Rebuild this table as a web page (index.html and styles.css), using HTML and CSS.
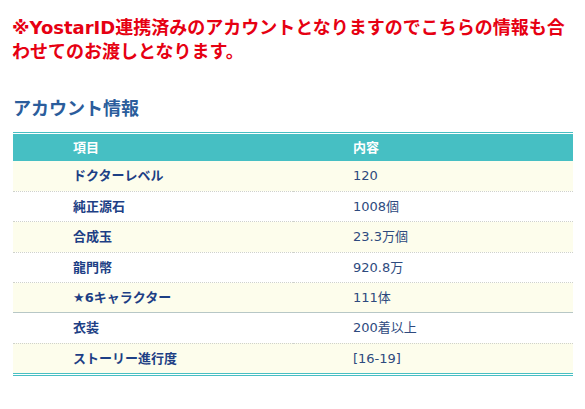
FILE: index.html
```html
<!DOCTYPE html>
<html lang="ja">
<head>
    <meta charset="UTF-8">
    <meta name="viewport" content="width=device-width, initial-scale=1.0">
    <title>アカウント情報</title>
    <link rel="stylesheet" href="styles.css">
</head>

<body>
    <div class="conteudo">
        <p class="aviso">※YostarID連携済みのアカウントとなりますのでこちらの情報も合わせてのお渡しとなります。</p>

        <h2 class="titulo">アカウント情報</h2>

        <div class="tabela">
            <table>
                <thead>
                    <tr>
                        <th>項目</th>
                        <th>内容</th>
                    </tr>
                </thead>
                <tbody>
                    <tr class="claro">
                        <th>ドクターレベル</th>
                        <td>120</td>
                    </tr>
                    <tr>
                        <th>純正源石</th>
                        <td>1008個</td>
                    </tr>
                    <tr class="claro">
                        <th>合成玉</th>
                        <td>23.3万個</td>
                    </tr>
                    <tr>
                        <th>龍門幣</th>
                        <td>920.8万</td>
                    </tr>
                    <tr class="claro solido">
                        <th>★6キャラクター</th>
                        <td>111体</td>
                    </tr>
                    <tr>
                        <th>衣装</th>
                        <td>200着以上</td>
                    </tr>
                    <tr class="claro ultimo">
                        <th>ストーリー進行度</th>
                        <td>[16-19]</td>
                    </tr>
                </tbody>
            </table>
        </div>
    </div>
</body>

</html>
```

FILE: styles.css
```css
body {
    margin: 0;
    background-color: #fff;
    font-family: "DejaVu Sans", "Noto Sans CJK JP", sans-serif;
}

.conteudo {
    padding: 16px 12px 0 13px;
}

.aviso {
    margin: 0 0 0 -1px;
    color: #e60012;
    font-size: 18px;
    font-weight: bold;
    line-height: 24px;
}

.titulo {
    margin: 34px 0 12px;
    color: #2b5d9c;
    font-size: 18px;
    font-weight: bold;
    line-height: 22px;
}

.tabela {
    border-top: 1px solid #48bfc3;
    border-bottom: 3px double #48bfc3;
    padding-top: 1px;
}

table {
    width: 100%;
    border-collapse: collapse;
    table-layout: fixed;
    font-size: 13px;
}

th,
td {
    text-align: left;
    padding: 7px 0 7px 60px;
    line-height: 15.4px;
    border-bottom: 1px dotted #cfd2cc;
}

thead th {
    background-color: #46bfc3;
    color: #fff;
    padding: 6px 0 6px 60px;
    border-bottom: none;
}

tbody th {
    color: #1d3f85;
}

tbody td {
    color: #2e4a7e;
    font-weight: normal;
}

tr.claro {
    background-color: #fdfdec;
}

tr.solido th,
tr.solido td {
    border-bottom: 1px solid #b7c7c6;
}

tr.ultimo th,
tr.ultimo td {
    border-bottom: none;
}
```
